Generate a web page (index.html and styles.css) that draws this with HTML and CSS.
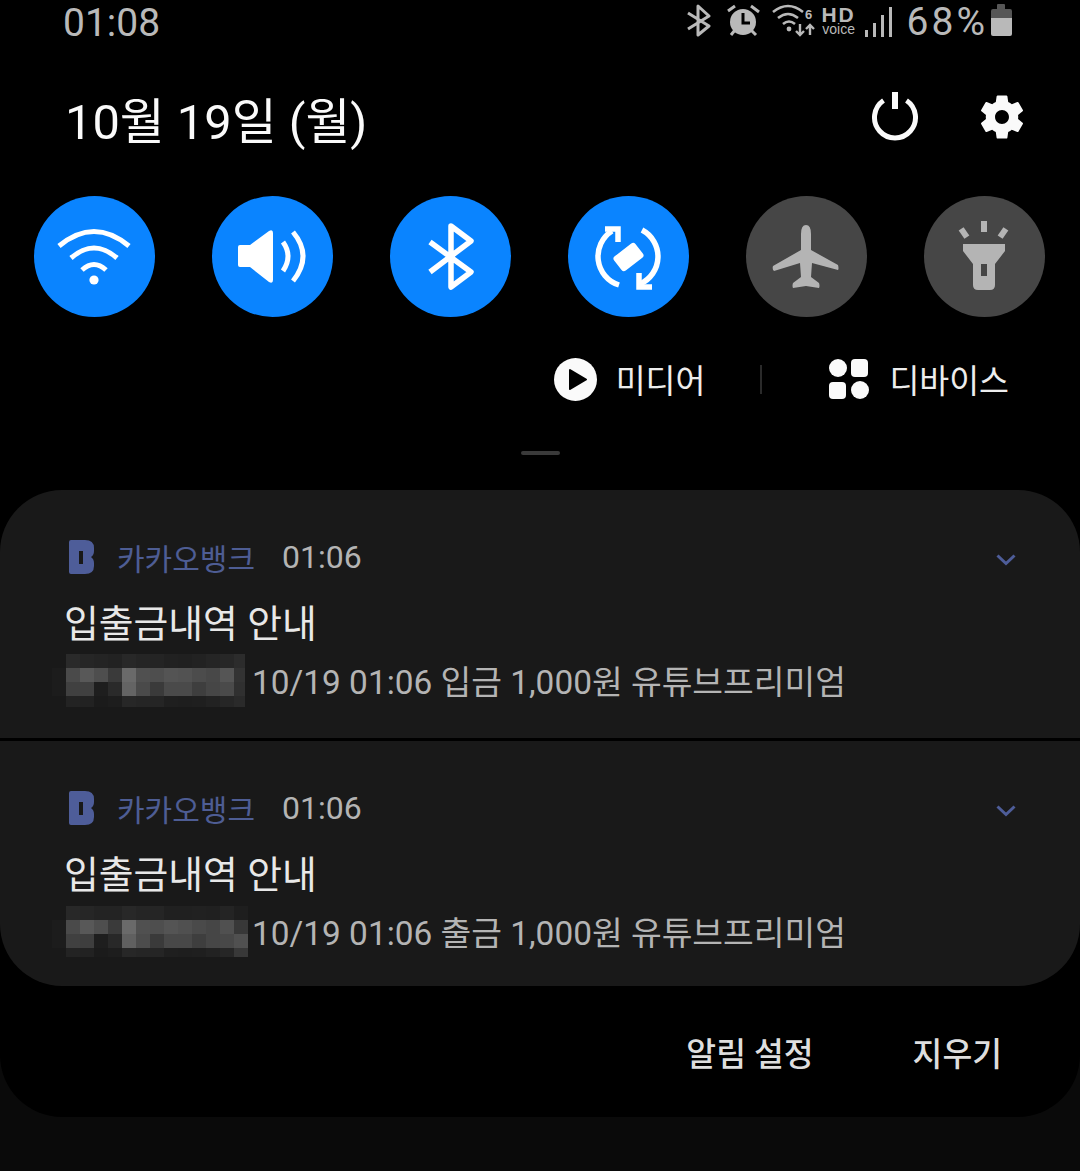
FILE: index.html
```html
<!DOCTYPE html>
<html lang="ko">
<head>
  <meta charset="UTF-8" />
  <title>알림 패널</title>
  <link rel="stylesheet" href="styles.css">
</head>
<body>
  <div class="shade">
    <div class="status">
      <span class="clock">01:08</span>
      <div class="status-icons">
        <svg class="st-bt" width="26" height="34" viewBox="0 0 26 34"><path d="M3 9 L24 22 L13 31 V2 L24 12 L3 25" fill="none" stroke="#b9b9b9" stroke-width="3" stroke-linejoin="round"/></svg>
        <svg class="st-alarm" width="36" height="34" viewBox="0 0 36 34">
          <circle cx="18" cy="19" r="13" fill="#b9b9b9"/>
          <path d="M18 10 V20 H25" fill="none" stroke="#000" stroke-width="3"/>
          <path d="M3 8 L10 3 M26 3 L34 9 M6 32 L10 27 M26 27 L31 32" fill="none" stroke="#b9b9b9" stroke-width="3"/>
        </svg>
        <svg class="st-wifi" width="46" height="36" viewBox="0 0 46 36">
          <path d="M3 10 Q18 -2 33 10 M8 16 Q18 8 28 16 M13 22 Q19 17 25 22" fill="none" stroke="#b9b9b9" stroke-width="2.6"/>
          <circle cx="19" cy="27" r="2.4" fill="#b9b9b9"/>
          <path d="M30 22 V33 M26 29 L30 33 L34 29 M40 33 V23 M36 27 L40 23 L44 27" fill="none" stroke="#b9b9b9" stroke-width="2.4"/>
          <text x="35" y="17" class="st-six">6</text>
        </svg>
        <div class="hd"><span class="hd-top">HD</span><span class="hd-sub">voice</span></div>
        <svg class="st-signal" width="27" height="30" viewBox="0 0 27 30" fill="#b9b9b9">
          <rect x="0" y="23" width="3" height="7"/>
          <rect x="8" y="16" width="3" height="14"/>
          <rect x="16" y="8" width="3" height="22"/>
          <rect x="24" y="0" width="3" height="30"/>
        </svg>
        <span class="percent">68%</span>
        <svg class="st-batt" width="21" height="32" viewBox="0 0 21 32">
          <path d="M6 1 Q6 0 7 0 H13 Q14 0 14 1 V5 H19 Q21 5 21 7 V14 H0 V7 Q0 5 2 5 H6Z" fill="#565656"/>
          <path d="M0 14 H21 V30 Q21 32 19 32 H2 Q0 32 0 30Z" fill="#b9b9b9"/>
        </svg>
      </div>
    </div>

    <div class="head">
      <span class="date">10월 19일 (월)</span>
      <div class="head-icons">
        <svg width="48" height="50" viewBox="0 1 48 50" fill="none" stroke="#fafafa">
          <path d="M12.5 9.5 A20.5 20.5 0 1 0 35.5 9.5" stroke-width="5"/>
          <path d="M24 1 V18" stroke-width="6"/>
        </svg>
        <svg width="54" height="54" viewBox="0 0 24 24" fill="#fafafa"><path d="M19.14 12.94c.04-.3.06-.61.06-.94 0-.32-.02-.64-.07-.94l2.03-1.58c.18-.14.23-.41.12-.61l-1.92-3.32c-.12-.22-.37-.29-.59-.22l-2.39.96c-.5-.38-1.03-.7-1.62-.94l-.36-2.54c-.04-.24-.24-.41-.48-.41h-3.84c-.24 0-.43.17-.47.41l-.36 2.54c-.59.24-1.13.57-1.62.94l-2.39-.96c-.22-.08-.47 0-.59.22L2.74 8.87c-.12.21-.08.47.12.61l2.03 1.58c-.05.3-.09.63-.09.94s.02.64.07.94l-2.03 1.58c-.18.14-.23.41-.12.61l1.92 3.32c.12.22.37.29.59.22l2.39-.96c.5.38 1.03.7 1.62.94l.36 2.54c.05.24.24.41.48.41h3.84c.24 0 .44-.17.47-.41l.36-2.54c.59-.24 1.13-.56 1.62-.94l2.39.96c.22.08.47 0 .59-.22l1.92-3.32c.12-.22.07-.47-.12-.61l-2.01-1.58zM12 15.1c-1.71 0-3.1-1.39-3.1-3.1s1.39-3.1 3.1-3.1 3.1 1.39 3.1 3.1-1.39 3.1-3.1 3.1z"/></svg>
      </div>
    </div>

    <div class="toggles">
      <div class="toggle on">
        <svg viewBox="0 0 121 121" fill="none" stroke="#fff" stroke-width="5">
          <path d="M25 50 Q60 21 95 50 M37 62 Q60 42 83 62 M48 74 Q60 63 72 74"/>
          <circle cx="60" cy="84" r="4.6" fill="#fff" stroke="none"/>
        </svg>
      </div>
      <div class="toggle on">
        <svg viewBox="0 0 121 121" fill="none" stroke="#fff" stroke-width="5">
          <path d="M28 49 H38 L57 35 Q61 33 61 37 V84 Q61 88 57 86 L38 71 H28 Q26 71 26 69 V51 Q26 49 28 49Z" fill="#fff" stroke="none"/>
          <path d="M71 46 Q81 60 71 75 M81 36 Q101 60 81 85"/>
        </svg>
      </div>
      <div class="toggle on">
        <svg viewBox="0 0 121 121" fill="none" stroke="#fff" stroke-width="5.5" stroke-linejoin="round">
          <path d="M40 46 L81 76 L61 91 V30 L81 45 L40 76"/>
        </svg>
      </div>
      <div class="toggle on">
        <svg viewBox="0 0 121 121" fill="none" stroke="#fff" stroke-width="5.5">
          <path d="M44 35 A30 30 0 0 0 51 89 M74 34 A30 30 0 0 1 72 88"/>
          <path d="M37 33 H50 V46 M71 77 V91 H84"/>
          <rect x="47" y="52" width="27" height="18" rx="3" fill="#fff" stroke="none" transform="rotate(-38 60.5 61)"/>
        </svg>
      </div>
      <div class="toggle">
        <svg viewBox="0 0 121 121" fill="#b4b4b4">
          <path d="M60 29 Q65 29 65 38 V54 L92 69 Q93 73 92 74 L66 67 L65 81 L73 87 Q74 90 73 92 L60 90 L47 92 Q46 90 47 87 L55 81 L54 67 L28 75 Q26 73 27 70 L55 54 V38 Q55 29 60 29Z"/>
        </svg>
      </div>
      <div class="toggle">
        <svg viewBox="0 0 121 121" fill="#b4b4b4">
          <rect x="57" y="25" width="6" height="11"/>
          <rect x="37" y="32" width="6" height="10" transform="rotate(-35 40 37)"/>
          <rect x="76" y="32" width="6" height="10" transform="rotate(35 79 37)"/>
          <path d="M39 48 H81 V55 L71 68 V89 Q71 94 66 94 H54 Q49 94 49 89 V68 L39 55Z"/>
          <rect x="57" y="68" width="6" height="12" fill="#464646"/>
        </svg>
      </div>
    </div>

    <div class="links">
      <div class="link">
        <svg width="43" height="43" viewBox="0 0 43 43">
          <circle cx="21.5" cy="21.5" r="21.5" fill="#fafafa"/>
          <path d="M16 12 L32 21.5 L16 31Z" fill="#000" stroke="#000" stroke-width="2" stroke-linejoin="round"/>
        </svg>
        <span>미디어</span>
      </div>
      <i class="link-sep"></i>
      <div class="link">
        <svg width="40" height="40" viewBox="0 0 40 40" fill="#fafafa">
          <circle cx="9" cy="9" r="9"/>
          <rect x="22" y="0" width="17" height="18" rx="4"/>
          <rect x="0" y="23" width="17" height="17" rx="4"/>
          <circle cx="31" cy="31" r="9"/>
        </svg>
        <span>디바이스</span>
      </div>
    </div>

    <div class="handle"></div>

    <div class="cards">
      <div class="card">
        <div class="card-top">
          <svg class="logo" width="25" height="34" viewBox="0 0 25 34">
            <path d="M0 2 Q0 0 2 0 H16 Q25 0 25 8 V11 Q25 15 22 17 Q25 19 25 23 V26 Q25 34 16 34 H2 Q0 34 0 32Z" fill="#4e5d99"/>
            <rect x="10" y="11" width="4" height="13" fill="#191919"/>
          </svg>
          <span class="app">카카오뱅크</span>
          <span class="time">01:06</span>
          <svg class="chev" width="20" height="12" viewBox="0 0 20 12"><path d="M1.5 1.5 L10 9.5 L18.5 1.5" fill="none" stroke="#4e5d99" stroke-width="3"/></svg>
        </div>
        <div class="title">입출금내역 안내</div>
        <div class="body-row">
          <svg class="mosaic" width="200" height="56" viewBox="0 0 200 56">
            <g>
              <rect x="14" y="0" width="14" height="14" fill="#2a2a2a"/><rect x="28" y="0" width="14" height="14" fill="#262626"/><rect x="42" y="0" width="14" height="14" fill="#242424"/><rect x="56" y="0" width="14" height="14" fill="#222222"/><rect x="70" y="0" width="14" height="14" fill="#282828"/><rect x="84" y="0" width="14" height="14" fill="#252525"/><rect x="98" y="0" width="14" height="14" fill="#242424"/><rect x="112" y="0" width="14" height="14" fill="#212121"/><rect x="126" y="0" width="14" height="14" fill="#202020"/><rect x="140" y="0" width="14" height="14" fill="#222222"/><rect x="154" y="0" width="14" height="14" fill="#252525"/><rect x="168" y="0" width="14" height="14" fill="#272727"/><rect x="182" y="0" width="11" height="14" fill="#2c2c2c"/>
            </g>
            <g>
              <rect x="0" y="14" width="14" height="28" fill="#1c1c1c"/>
              <rect x="14" y="14" width="14" height="14" fill="#4a4a4a"/><rect x="28" y="14" width="14" height="14" fill="#585858"/><rect x="42" y="14" width="14" height="14" fill="#4e4e4e"/><rect x="56" y="14" width="14" height="14" fill="#3a3a3a"/><rect x="70" y="14" width="14" height="14" fill="#6a6a6a"/><rect x="84" y="14" width="14" height="14" fill="#505050"/><rect x="98" y="14" width="14" height="14" fill="#4e4e4e"/><rect x="112" y="14" width="14" height="14" fill="#545454"/><rect x="126" y="14" width="14" height="14" fill="#525252"/><rect x="140" y="14" width="14" height="14" fill="#4c4c4c"/><rect x="154" y="14" width="14" height="14" fill="#484848"/><rect x="168" y="14" width="14" height="14" fill="#555555"/><rect x="182" y="14" width="11" height="14" fill="#333333"/>
            </g>
            <g>
              <rect x="14" y="28" width="14" height="14" fill="#404040"/><rect x="28" y="28" width="14" height="14" fill="#404040"/><rect x="42" y="28" width="14" height="14" fill="#1e1e1e"/><rect x="56" y="28" width="14" height="14" fill="#2a2a2a"/><rect x="70" y="28" width="14" height="14" fill="#646464"/><rect x="84" y="28" width="14" height="14" fill="#4a4a4a"/><rect x="98" y="28" width="14" height="14" fill="#3a3a3a"/><rect x="112" y="28" width="14" height="14" fill="#4a4a4a"/><rect x="126" y="28" width="14" height="14" fill="#4a4a4a"/><rect x="140" y="28" width="14" height="14" fill="#3e3e3e"/><rect x="154" y="28" width="14" height="14" fill="#464646"/><rect x="168" y="28" width="14" height="14" fill="#4a4a4a"/><rect x="182" y="28" width="11" height="14" fill="#303030"/>
            </g>
            <g>
              <rect x="14" y="42" width="14" height="11" fill="#232323"/><rect x="28" y="42" width="14" height="11" fill="#222222"/><rect x="42" y="42" width="14" height="11" fill="#1b1b1b"/><rect x="56" y="42" width="14" height="11" fill="#1d1d1d"/><rect x="70" y="42" width="14" height="11" fill="#272727"/><rect x="84" y="42" width="14" height="11" fill="#252525"/><rect x="98" y="42" width="14" height="11" fill="#252525"/><rect x="112" y="42" width="14" height="11" fill="#1f1f1f"/><rect x="126" y="42" width="14" height="11" fill="#1e1e1e"/><rect x="140" y="42" width="14" height="11" fill="#1f1f1f"/><rect x="154" y="42" width="14" height="11" fill="#222222"/><rect x="168" y="42" width="14" height="11" fill="#262626"/><rect x="182" y="42" width="11" height="11" fill="#2a2a2a"/>
            </g>
          </svg>
          <span class="msg">10/19 01:06 입금 1,000원 유튜브프리미엄</span>
        </div>
      </div>

      <div class="card card-last">
        <div class="card-top">
          <svg class="logo" width="25" height="34" viewBox="0 0 25 34">
            <path d="M0 2 Q0 0 2 0 H16 Q25 0 25 8 V11 Q25 15 22 17 Q25 19 25 23 V26 Q25 34 16 34 H2 Q0 34 0 32Z" fill="#4e5d99"/>
            <rect x="10" y="11" width="4" height="13" fill="#191919"/>
          </svg>
          <span class="app">카카오뱅크</span>
          <span class="time">01:06</span>
          <svg class="chev" width="20" height="12" viewBox="0 0 20 12"><path d="M1.5 1.5 L10 9.5 L18.5 1.5" fill="none" stroke="#4e5d99" stroke-width="3"/></svg>
        </div>
        <div class="title">입출금내역 안내</div>
        <div class="body-row">
          <svg class="mosaic" width="200" height="56" viewBox="0 0 200 56">
            <g>
              <rect x="14" y="1" width="14" height="14" fill="#282828"/><rect x="28" y="1" width="14" height="14" fill="#262626"/><rect x="42" y="1" width="14" height="14" fill="#232323"/><rect x="56" y="1" width="14" height="14" fill="#232323"/><rect x="70" y="1" width="14" height="14" fill="#282828"/><rect x="84" y="1" width="14" height="14" fill="#252525"/><rect x="98" y="1" width="14" height="14" fill="#252525"/><rect x="112" y="1" width="14" height="14" fill="#202020"/><rect x="126" y="1" width="14" height="14" fill="#202020"/><rect x="140" y="1" width="14" height="14" fill="#212121"/><rect x="154" y="1" width="14" height="14" fill="#202020"/><rect x="168" y="1" width="14" height="14" fill="#242424"/><rect x="182" y="1" width="14" height="14" fill="#1e1e1e"/>
            </g>
            <g>
              <rect x="0" y="15" width="14" height="28" fill="#1c1c1c"/>
              <rect x="14" y="15" width="14" height="14" fill="#4a4a4a"/><rect x="28" y="15" width="14" height="14" fill="#585858"/><rect x="42" y="15" width="14" height="14" fill="#4e4e4e"/><rect x="56" y="15" width="14" height="14" fill="#3a3a3a"/><rect x="70" y="15" width="14" height="14" fill="#6a6a6a"/><rect x="84" y="15" width="14" height="14" fill="#505050"/><rect x="98" y="15" width="14" height="14" fill="#4e4e4e"/><rect x="112" y="15" width="14" height="14" fill="#545454"/><rect x="126" y="15" width="14" height="14" fill="#505050"/><rect x="140" y="15" width="14" height="14" fill="#4a4a4a"/><rect x="154" y="15" width="14" height="14" fill="#464646"/><rect x="168" y="15" width="14" height="14" fill="#505050"/><rect x="182" y="15" width="14" height="14" fill="#383838"/>
            </g>
            <g>
              <rect x="14" y="29" width="14" height="14" fill="#404040"/><rect x="28" y="29" width="14" height="14" fill="#3e3e3e"/><rect x="42" y="29" width="14" height="14" fill="#1e1e1e"/><rect x="56" y="29" width="14" height="14" fill="#282828"/><rect x="70" y="29" width="14" height="14" fill="#606060"/><rect x="84" y="29" width="14" height="14" fill="#4c4c4c"/><rect x="98" y="29" width="14" height="14" fill="#3a3a3a"/><rect x="112" y="29" width="14" height="14" fill="#484848"/><rect x="126" y="29" width="14" height="14" fill="#484848"/><rect x="140" y="29" width="14" height="14" fill="#3e3e3e"/><rect x="154" y="29" width="14" height="14" fill="#464646"/><rect x="168" y="29" width="14" height="14" fill="#484848"/><rect x="182" y="29" width="14" height="14" fill="#505050"/>
            </g>
            <g>
              <rect x="14" y="43" width="14" height="9" fill="#232323"/><rect x="28" y="43" width="14" height="9" fill="#222222"/><rect x="42" y="43" width="14" height="9" fill="#1b1b1b"/><rect x="56" y="43" width="14" height="9" fill="#1d1d1d"/><rect x="70" y="43" width="14" height="9" fill="#272727"/><rect x="84" y="43" width="14" height="9" fill="#252525"/><rect x="98" y="43" width="14" height="9" fill="#252525"/><rect x="112" y="43" width="14" height="9" fill="#1f1f1f"/><rect x="126" y="43" width="14" height="9" fill="#1e1e1e"/><rect x="140" y="43" width="14" height="9" fill="#1f1f1f"/><rect x="154" y="43" width="14" height="9" fill="#222222"/><rect x="168" y="43" width="14" height="9" fill="#262626"/><rect x="182" y="43" width="14" height="9" fill="#383838"/>
            </g>
          </svg>
          <span class="msg">10/19 01:06 출금 1,000원 유튜브프리미엄</span>
        </div>
      </div>
    </div>

    <div class="actions">
      <span>알림 설정</span>
      <span>지우기</span>
    </div>
  </div>
</body>
</html>
```

FILE: styles.css
```css
html, body {
  margin: 0;
  padding: 0;
}
body {
  width: 1080px;
  height: 1171px;
  overflow: hidden;
  background-color: #0a0a0a;
  font-family: Roboto, "Noto Sans CJK KR", sans-serif;
}
svg {
  display: block;
}

.shade {
  height: 1117px;
  background-color: #000;
  border-radius: 0 0 62px 62px;
}

/* status bar */
.status {
  height: 46px;
  display: flex;
  align-items: flex-start;
  justify-content: space-between;
  padding: 0 68px 0 63px;
  color: #b9b9b9;
}
.clock {
  font-size: 39px;
  line-height: 46px;
}
.status-icons {
  display: flex;
  align-items: flex-start;
}
.st-bt {
  margin-top: 4px;
}
.st-alarm {
  margin: 3px 0 0 14px;
}
.st-wifi {
  margin: 2px 0 0 9px;
}
.st-six {
  font-family: "Liberation Sans", sans-serif;
  font-size: 13px;
  font-weight: bold;
  fill: #b9b9b9;
}
.hd {
  margin: 7px 0 0 6px;
  width: 34px;
  display: flex;
  flex-direction: column;
  align-items: center;
}
.hd-top {
  font-family: "Liberation Sans", sans-serif;
  font-size: 21px;
  font-weight: bold;
  line-height: 16px;
  letter-spacing: 2px;
}
.hd-sub {
  font-family: "Liberation Sans", sans-serif;
  font-size: 14px;
  line-height: 13px;
}
.st-signal {
  margin: 7px 0 0 9px;
}
.percent {
  margin-left: 15px;
  font-size: 39px;
  line-height: 44px;
  letter-spacing: 3px;
}
.st-batt {
  margin: 4px 0 0 3px;
}

/* date row */
.head {
  height: 142px;
  margin-bottom: 8px;
  display: flex;
  align-items: center;
  justify-content: space-between;
  padding: 0 51px 0 65px;
}
.date {
  font-size: 48.8px;
  color: #fafafa;
}
.head-icons {
  display: flex;
  align-items: center;
  gap: 56px;
}

/* quick toggles */
.toggles {
  display: flex;
  justify-content: space-between;
  padding: 0 35px 0 34px;
}
.toggle {
  width: 121px;
  height: 121px;
  border-radius: 50%;
  background-color: #464646;
}
.toggle.on {
  background-color: #0a84ff;
}

.links {
  height: 46px;
  margin-top: 39px;
  display: flex;
  align-items: center;
  justify-content: flex-end;
  padding-right: 71px;
  font-size: 32.5px;
  color: #ededed;
}
.link {
  display: flex;
  align-items: center;
  gap: 20px;
}
.link:first-child {
  gap: 19px;
}
.link span {
  padding-bottom: 2px;
}
.link-sep {
  width: 2px;
  height: 29px;
  margin: 0 67px 0 55px;
  background-color: #2a2a2a;
}

.handle {
  width: 39px;
  height: 4px;
  margin: 49px auto 0;
  border-radius: 2px;
  background-color: #3a3a3a;
}

/* notification cards */
.cards {
  margin-top: 35px;
  height: 496px;
  border-radius: 62px;
  overflow: hidden;
  background-color: #000;
}
.card {
  height: 248px;
  box-sizing: border-box;
  padding: 47px 64px 0 52px;
  margin-bottom: 3px;
  background-color: #191919;
}
.card-last {
  height: 245px;
  margin-bottom: 0;
}
.card-top {
  height: 40px;
  display: flex;
  align-items: center;
  padding-left: 17px;
}
.app {
  margin-left: 23px;
  font-size: 30px;
  color: #4e5d94;
}
.time {
  margin-left: 27px;
  font-size: 32px;
  color: #b4b4b4;
}
.chev {
  margin-left: auto;
  margin-top: 6px;
}
.title {
  margin-top: 22px;
  padding-left: 12px;
  font-size: 37.8px;
  line-height: 50px;
  color: #e8e8e8;
}
.body-row {
  margin-top: 5px;
  display: flex;
  align-items: flex-start;
}
.msg {
  font-size: 33.4px;
  line-height: 58px;
  color: #b4b4b4;
  white-space: nowrap;
}

.actions {
  height: 131px;
  padding-right: 78px;
  display: flex;
  align-items: center;
  justify-content: flex-end;
  gap: 99px;
  font-size: 32.4px;
  font-weight: 500;
  color: #dedede;
}
```
